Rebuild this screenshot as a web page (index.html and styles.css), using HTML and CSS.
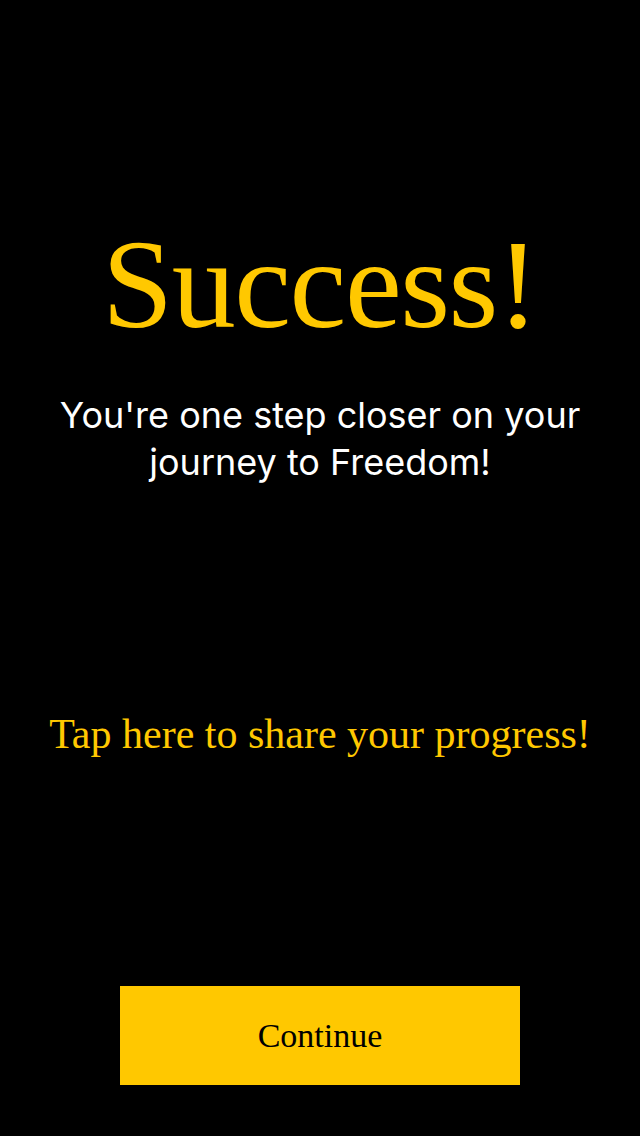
FILE: index.html
```html
<!DOCTYPE html>
<html>
<head>
<meta charset="utf-8">
<link rel="stylesheet" href="styles.css">
</head>
<body>
<main class="screen">
  <h1 class="title">Success!</h1>
  <p class="subtitle">You're one step closer on your journey to Freedom!</p>
  <a class="share">Tap here to share your progress!</a>
  <button class="continue">Continue</button>
</main>
</body>
</html>
```
FILE: styles.css
```css
html, body {
  margin: 0;
  padding: 0;
  background: #000;
}
.screen {
  width: 640px;
  height: 1136px;
  display: flex;
  flex-direction: column;
  align-items: center;
  box-sizing: border-box;
  padding-top: 214px;
}
.title {
  margin: 0;
  font-family: "Liberation Serif", serif;
  font-weight: normal;
  font-size: 128px;
  line-height: 140px;
  letter-spacing: -1.5px;
  color: #ffc800;
}
.subtitle {
  margin: 38px 0 0;
  width: 580px;
  text-align: center;
  font-family: Inter, "Liberation Sans", sans-serif;
  font-size: 36px;
  line-height: 47px;
  color: #fff;
}
.share {
  margin-top: 224px;
  font-family: "Liberation Serif", serif;
  font-size: 42px;
  line-height: 48px;
  color: #ffc800;
}
.continue {
  margin-top: auto;
  margin-bottom: 51px;
  width: 400px;
  height: 99px;
  border: 0;
  border-radius: 0;
  background: #ffc800;
  font-family: "Liberation Serif", serif;
  font-size: 34px;
  color: #000;
}
```
